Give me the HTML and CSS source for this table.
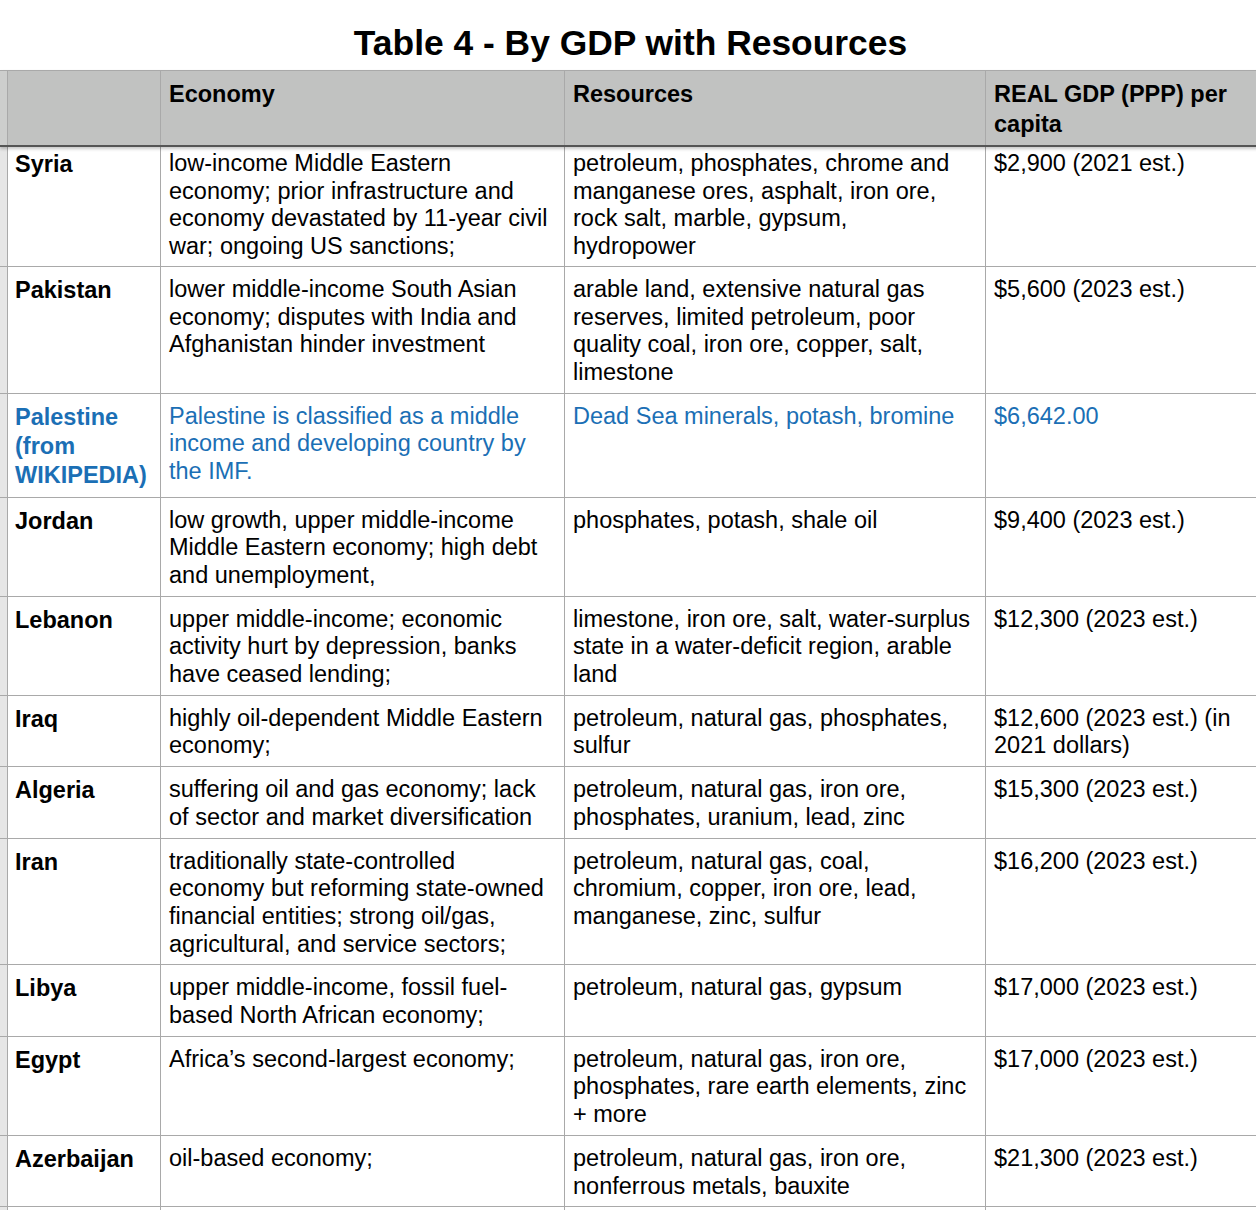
FILE: index.html
```html
<!DOCTYPE html>
<html lang="en">
<head>
<meta charset="utf-8">
<title>Table 4 - By GDP with Resources</title>
<link rel="stylesheet" href="styles.css">
</head>
<body>
<h1 class="title">Table 4 - By GDP with Resources</h1>
<div class="sheet">
  <div class="grid head">
    <div class="strip"></div>
    <div class="cell"></div>
    <div class="cell">Economy</div>
    <div class="cell res">Resources</div>
    <div class="cell">REAL GDP (PPP) per capita</div>
  </div>
  <div class="grid body">
    <div class="strip"></div>
    <div class="cell name first">Syria</div>
    <div class="cell first">low-income Middle Eastern economy; prior infrastructure and economy devastated by 11-year civil war; ongoing US sanctions;</div>
    <div class="cell res first">petroleum, phosphates, chrome and manganese ores, asphalt, iron ore, rock salt, marble, gypsum, hydropower</div>
    <div class="cell first">$2,900 (2021 est.)</div>

    <div class="strip"></div>
    <div class="cell name">Pakistan</div>
    <div class="cell">lower middle-income South Asian economy; disputes with India and Afghanistan hinder investment</div>
    <div class="cell res">arable land, extensive natural gas reserves, limited petroleum, poor quality coal, iron ore, copper, salt, limestone</div>
    <div class="cell">$5,600 (2023 est.)</div>

    <div class="strip"></div>
    <div class="cell name blue">Palestine (from WIKIPEDIA)</div>
    <div class="cell blue">Palestine is classified as a middle income and developing country by the IMF.</div>
    <div class="cell res blue">Dead Sea minerals, potash, bromine</div>
    <div class="cell blue">$6,642.00</div>

    <div class="strip"></div>
    <div class="cell name">Jordan</div>
    <div class="cell">low growth, upper middle-income Middle Eastern economy; high debt and unemployment,</div>
    <div class="cell res">phosphates, potash, shale oil</div>
    <div class="cell">$9,400 (2023 est.)</div>

    <div class="strip"></div>
    <div class="cell name">Lebanon</div>
    <div class="cell">upper middle-income; economic activity hurt by depression, banks have ceased lending;</div>
    <div class="cell res">limestone, iron ore, salt, water-surplus state in a water-deficit region, arable land</div>
    <div class="cell">$12,300 (2023 est.)</div>

    <div class="strip"></div>
    <div class="cell name">Iraq</div>
    <div class="cell">highly oil-dependent Middle Eastern economy;</div>
    <div class="cell res">petroleum, natural gas, phosphates, sulfur</div>
    <div class="cell">$12,600 (2023 est.) (in 2021 dollars)</div>

    <div class="strip"></div>
    <div class="cell name">Algeria</div>
    <div class="cell">suffering oil and gas economy; lack of sector and market diversification</div>
    <div class="cell res">petroleum, natural gas, iron ore, phosphates, uranium, lead, zinc</div>
    <div class="cell">$15,300 (2023 est.)</div>

    <div class="strip"></div>
    <div class="cell name">Iran</div>
    <div class="cell">traditionally state-controlled economy but reforming state-owned financial entities; strong oil/gas, agricultural, and service sectors;</div>
    <div class="cell res">petroleum, natural gas, coal, chromium, copper, iron ore, lead, manganese, zinc, sulfur</div>
    <div class="cell">$16,200 (2023 est.)</div>

    <div class="strip"></div>
    <div class="cell name">Libya</div>
    <div class="cell">upper middle-income, fossil fuel-based North African economy;</div>
    <div class="cell res">petroleum, natural gas, gypsum</div>
    <div class="cell">$17,000 (2023 est.)</div>

    <div class="strip"></div>
    <div class="cell name">Egypt</div>
    <div class="cell">Africa’s second-largest economy;</div>
    <div class="cell res">petroleum, natural gas, iron ore, phosphates, rare earth elements, zinc + more</div>
    <div class="cell">$17,000 (2023 est.)</div>

    <div class="strip"></div>
    <div class="cell name">Azerbaijan</div>
    <div class="cell">oil-based economy;</div>
    <div class="cell res">petroleum, natural gas, iron ore, nonferrous metals, bauxite</div>
    <div class="cell">$21,300 (2023 est.)</div>

    <div class="strip"></div>
    <div class="cell name">&nbsp;</div>
    <div class="cell">&nbsp;</div>
    <div class="cell res">&nbsp;</div>
    <div class="cell">&nbsp;</div>
  </div>
</div>
</body>
</html>
```

FILE: styles.css
```css
html, body {
  margin: 0;
  padding: 0;
  background: #ffffff;
}

body {
  width: 1256px;
  overflow: hidden;
  font-family: "Liberation Sans", Arial, Helvetica, sans-serif;
  color: #000000;
}

.title {
  margin: 0;
  height: 40px;
  padding: 23px 0 7px;
  font-size: 35.4px;
  line-height: 40px;
  font-weight: 700;
  text-align: center;
  padding-left: 5px;
}

.sheet {
  width: 1300px;
}

.grid {
  display: grid;
  grid-template-columns: 7px 152px 403px 420px 290px;
  column-gap: 1px;
  row-gap: 1px;
  background: #a9a9a9;
}

.head {
  position: relative;
  z-index: 1;
  border-top: 1px solid #a9a9a9;
  border-bottom: 2px solid #555555;
  box-shadow: 0 2px 3px rgba(0, 0, 0, 0.22);
}

.head .cell {
  background: #c1c2c1;
  font-weight: 700;
  line-height: 29.5px;
  padding: 9px 8px 6px;
  min-height: 59px;
}

.head .strip {
  background: #cdcecd;
}

.cell {
  background: #ffffff;
  font-size: 23.5px;
  line-height: 27.7px;
  padding: 9px 8px 6px;
}

.cell.res {
  padding-right: 10px;
}

.body .strip {
  background: #e6e6e6;
}

.cell.first {
  padding-top: 3px;
  padding-bottom: 5px;
}

.name {
  font-weight: 700;
  line-height: 29.3px;
  padding-left: 7px;
}

.blue {
  color: #1b6fb5;
}
```
